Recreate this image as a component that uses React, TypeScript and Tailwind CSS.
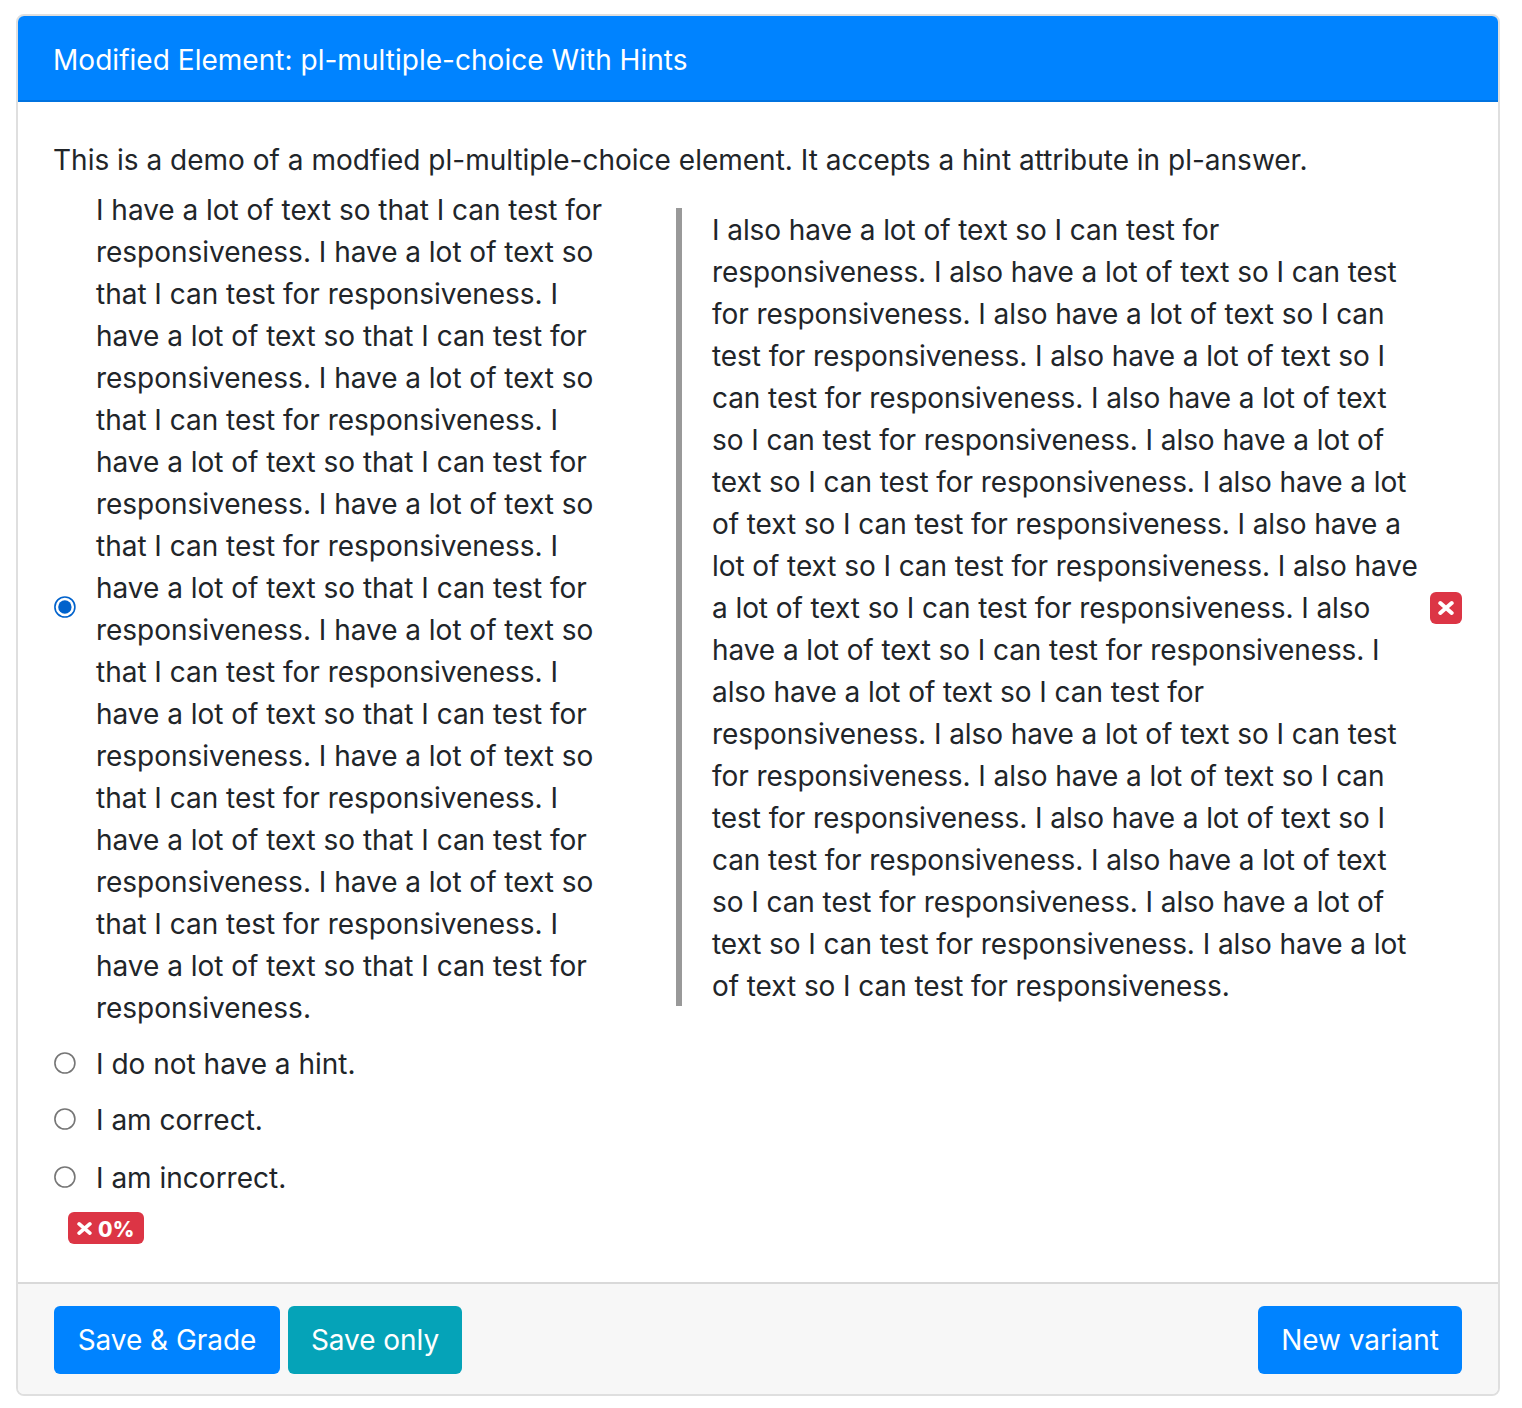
const left: string[] = [
  'I have a lot of text so that I can test for',
  ...Array.from({ length: 6 }).flatMap(() => [
    'responsiveness. I have a lot of text so',
    'that I can test for responsiveness. I',
    'have a lot of text so that I can test for',
  ]),
  'responsiveness.',
];
const right: string[] = [
  'I also have a lot of text so I can test for',
  'responsiveness. I also have a lot of text so I can test',
  'for responsiveness. I also have a lot of text so I can',
  'test for responsiveness. I also have a lot of text so I',
  'can test for responsiveness. I also have a lot of text',
  'so I can test for responsiveness. I also have a lot of',
  'text so I can test for responsiveness. I also have a lot',
  'of text so I can test for responsiveness. I also have a',
  'lot of text so I can test for responsiveness. I also have',
  'a lot of text so I can test for responsiveness. I also',
  'have a lot of text so I can test for responsiveness. I',
  'also have a lot of text so I can test for',
  'responsiveness. I also have a lot of text so I can test',
  'for responsiveness. I also have a lot of text so I can',
  'test for responsiveness. I also have a lot of text so I',
  'can test for responsiveness. I also have a lot of text',
  'so I can test for responsiveness. I also have a lot of',
  'text so I can test for responsiveness. I also have a lot',
  'of text so I can test for responsiveness.',
];

function Lines({ lines }: { lines: string[] }) {
  return (
    <>
      {lines.map((l, i) => (
        <span key={i} className="block whitespace-nowrap">{l}</span>
      ))}
    </>
  );
}

function Radio({ checked = false }: { checked?: boolean }) {
  return (
    <svg
      role="radio"
      aria-checked={checked}
      viewBox="0 0 22 22"
      className={checked ? 'mb-1 size-[22px] shrink-0 text-[#0062cc]' : 'mb-0.5 size-[22px] shrink-0 text-[#767676]'}
    >
      <circle cx="10.9" cy="11" r="10" fill="white" stroke="currentColor" strokeWidth="1.6" />
      {checked && <circle cx="10.9" cy="11" r="6.7" fill="currentColor" />}
    </svg>
  );
}

function Times({ className }: { className: string }) {
  return (
    <svg viewBox="0 0 16 16" className={className} fill="none" stroke="white" strokeWidth="4" strokeLinecap="round" aria-hidden="true">
      <path d="M2.3 3.1 13.7 12.9M13.7 3.1 2.3 12.9" />
    </svg>
  );
}

function Option({ label, className }: { label: string; className: string }) {
  return (
    <div className={className}>
      <Radio />
      <span>{label}</span>
    </div>
  );
}

export default function App() {
  return (
    <div className="h-[1408px] w-[1522px] bg-white px-4 pt-3.5 font-['Inter',sans-serif] text-[28px] leading-[42px] text-[#212529]">
      <div className="flex h-[1382px] w-[1484px] flex-col overflow-hidden rounded-lg border-2 border-[#dfdfdf]">
        <header className="h-[86px] shrink-0 border-b-2 border-[#0073e0] bg-[#0083ff] px-[35px] pt-[23px] tracking-[0.03px] text-white">
          Modified Element: pl-multiple-choice With Hints
        </header>
        <main className="grow px-9 pt-[37px]">
          <p className="-ml-px">This is a demo of a modfied pl-multiple-choice element. It accepts a hint attribute in pl-answer.</p>
          <div className="mt-2 flex h-[840px] items-center">
            <Radio checked />
            <div className="ml-5 w-[580px] shrink-0 tracking-[-0.02px]"><Lines lines={left} /></div>
            <div className="mb-1 h-[798px] w-[754px] shrink-0 border-l-[6px] border-[#999] pt-px pl-[30px] tracking-[-0.075px]">
              <Lines lines={right} />
            </div>
            <span className="mb-0.5 flex size-8 shrink-0 items-center justify-center rounded-md bg-[#dc3545]">
              <Times className="size-4" />
            </span>
          </div>
          <Option label="I do not have a hint." className="mt-3.5 flex items-center gap-5" />
          <Option label="I am correct." className="mt-3.5 flex items-center gap-5" />
          <Option label="I am incorrect." className="mt-4 flex items-center gap-5" />
          <div className="mt-[13px] ml-3.5 flex h-8 w-[76px] items-center gap-1.5 rounded-md bg-[#dc3545] pl-[9px] text-[21px] leading-8 font-bold text-white">
            <Times className="size-[15px] shrink-0" />
            <span className="pt-[3px] font-extrabold tracking-[0.3px]">0%</span>
          </div>
        </main>
        <footer className="flex h-[112px] shrink-0 items-start border-t-2 border-[#d9d9d9] bg-[#f7f7f7] px-9 pt-[22px] tracking-[-0.05px] text-white">
          <button className="h-[68px] w-[226px] rounded-md bg-[#0083ff]">Save &amp; Grade</button>
          <button className="ml-2 h-[68px] w-[174px] rounded-md bg-[#05a3b8]">Save only</button>
          <button className="ml-auto h-[68px] w-[204px] rounded-md bg-[#0083ff]">New variant</button>
        </footer>
      </div>
    </div>
  );
}
